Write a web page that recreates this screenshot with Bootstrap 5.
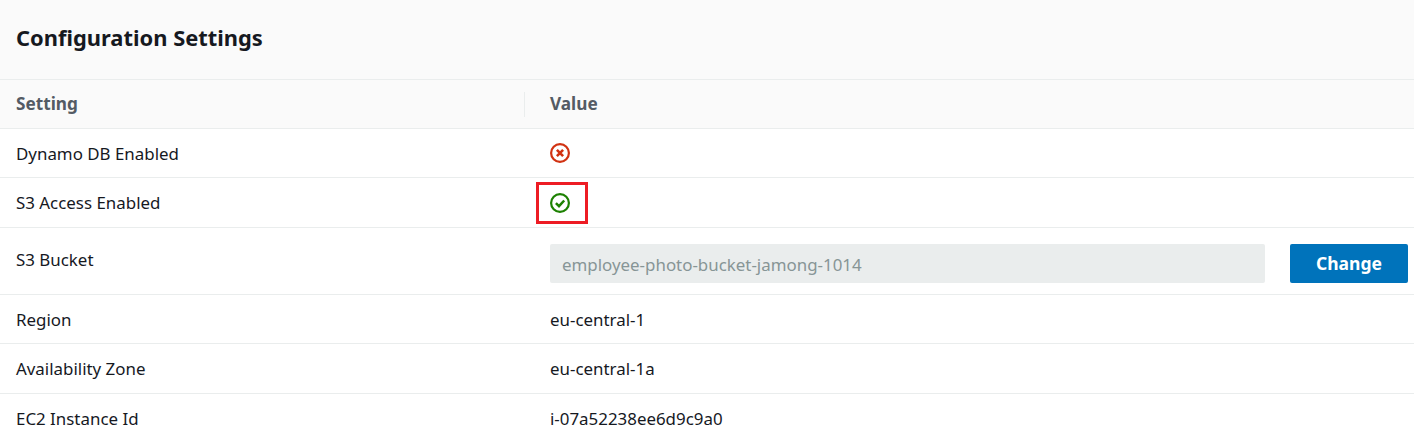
<!DOCTYPE html>
<html lang="en">
<head>
  <meta charset="UTF-8" />
  <meta name="viewport" content="width=device-width, initial-scale=1.0" />
  <title>Configuration Settings</title>
  <link href="https://cdn.jsdelivr.net/npm/bootstrap@5.3.0/dist/css/bootstrap.min.css" rel="stylesheet" />
  <style>
    html, body { height: 431px; overflow: hidden; }
    body { font-family: "Noto Sans", sans-serif; color: #16191f; background: #fff; }
    .panel-head { background: #fafafa; height: 80px; padding-left: 16px; padding-top: 20px; border-bottom: 1px solid #eaeded; }
    .panel-title { font-size: 21.9px; font-weight: 700; line-height: 36px; margin: 0; color: #16191f; }
    .cfg-table { table-layout: fixed; width: 100%; margin: 0; font-size: 16.9px; }
    .cfg-table th, .cfg-table td { padding: 0 6px 0 16px; border-bottom: 1px solid #eaeded; vertical-align: middle; color: #16191f; font-weight: 400; line-height: 24px; }
    .cfg-table td { padding-top: 2px; }
    .cfg-table td:last-child, .cfg-table th:last-child { padding-left: 16px; }
    .cfg-table thead th { background: #fafafa; color: #545b64; font-weight: 700; font-size: 17.2px; height: 48px; position: relative; }
    .col-sep { position: absolute; left: -10px; top: 12px; height: 25px; border-left: 1px solid #eaeded; }
    .r49 { height: 49px; }
    .r50 { height: 50px; }
    .r67 { height: 67px; }
    .cfg-table td.name-cell { padding-bottom: 4px; }
    .cfg-table td.icon-cell { padding-top: 0; }
    .cfg-table td.input-cell { padding-top: 5px; }
    .bucket-input.form-control { height: 39px; width: 715px; background: #eaeded; border: 0; border-radius: 2px; color: #879596; font-size: 16.9px; padding: 2px 12px 0; line-height: 37px; }
    .change-btn.btn { height: 39px; width: 118px; margin-left: 25px; padding: 0; background: #0073bb; border: 0; border-radius: 2px; color: #fff; font-weight: 700; font-size: 17.5px; }
    .hl-box { display: inline-flex; align-items: center; justify-content: center; width: 52px; height: 42px; margin-left: -14px; padding-right: 4px; border: 3px solid #ed1c24; vertical-align: middle; }
    .st-icon { display: block; width: 20px; height: 20px; }
  </style>
</head>
<body>
  <div class="panel-head">
    <h2 class="panel-title">Configuration Settings</h2>
  </div>
  <table class="table cfg-table">
    <colgroup>
      <col style="width: 534px" />
      <col />
    </colgroup>
    <thead>
      <tr>
        <th>Setting</th>
        <th><span class="col-sep"></span>Value</th>
      </tr>
    </thead>
    <tbody>
      <tr class="r49">
        <td>Dynamo DB Enabled</td>
        <td class="icon-cell">
          <svg class="st-icon" viewBox="0 0 20 20" fill="none" stroke="#d13212">
            <circle cx="10" cy="10" r="8.9" stroke-width="2.2" />
            <path d="M6.9 6.9l6.2 6.2M13.1 6.9l-6.2 6.2" stroke-width="2.6" />
          </svg>
        </td>
      </tr>
      <tr class="r50">
        <td>S3 Access Enabled</td>
        <td>
          <span class="hl-box">
            <svg class="st-icon" viewBox="0 0 20 20" fill="none" stroke="#1d8102">
              <circle cx="10" cy="10" r="8.9" stroke-width="2.2" />
              <path d="M5.9 10.1l3.1 3 5.2-5.6" stroke-width="2.5" />
            </svg>
          </span>
        </td>
      </tr>
      <tr class="r67">
        <td class="name-cell">S3 Bucket</td>
        <td class="input-cell">
          <div class="d-flex align-items-center">
            <input class="form-control bucket-input" type="text" value="employee-photo-bucket-jamong-1014" disabled />
            <button class="btn change-btn" type="button">Change</button>
          </div>
        </td>
      </tr>
      <tr class="r49">
        <td>Region</td>
        <td>eu-central-1</td>
      </tr>
      <tr class="r50">
        <td>Availability Zone</td>
        <td>eu-central-1a</td>
      </tr>
      <tr class="r49">
        <td>EC2 Instance Id</td>
        <td>i-07a52238ee6d9c9a0</td>
      </tr>
    </tbody>
  </table>
  <script src="https://cdn.jsdelivr.net/npm/bootstrap@5.3.0/dist/js/bootstrap.bundle.min.js"></script>
</body>
</html>
